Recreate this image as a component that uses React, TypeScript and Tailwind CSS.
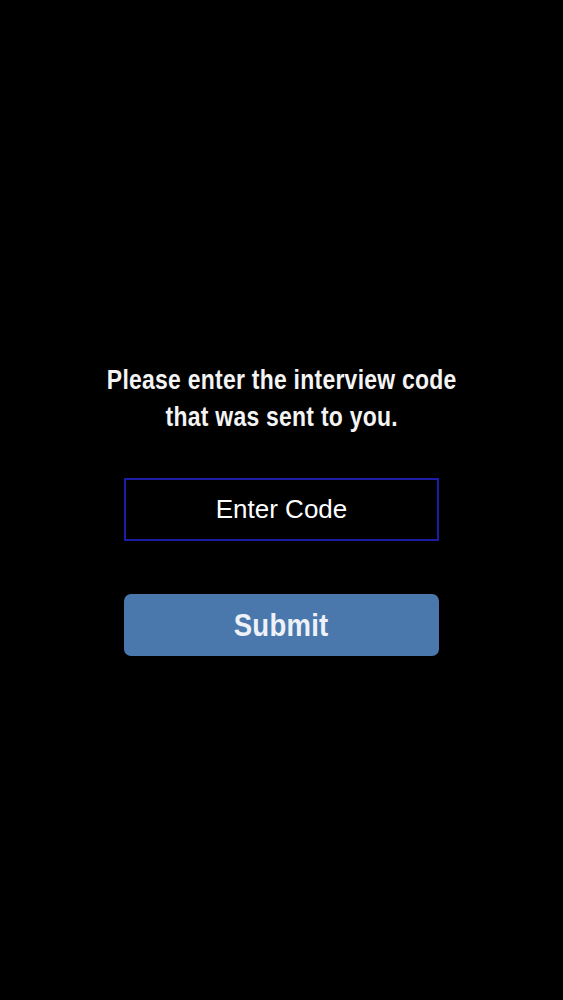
export default function App() {
  return (
    <div className="flex min-h-screen w-full flex-col items-center bg-black pt-[362px] font-['Liberation_Sans',Arial,sans-serif]">
      <h1 className="scale-x-[0.85] text-center text-[27px] font-bold leading-[37px] tracking-[0.3px] whitespace-nowrap text-[#f4f4f4]">
        Please enter the interview code
        <br />
        that was sent to you.
      </h1>

      <input
        type="text"
        placeholder="Enter Code"
        className="mt-[42px] h-[63px] w-[315px] border-2 border-[#1c1ca6] bg-black text-center text-[26px] text-white outline-none placeholder:text-white"
      />

      <button className="mt-[53px] flex h-[62px] w-[315px] items-center justify-center rounded-[7px] bg-[#4a78ac]">
        <span className="scale-x-[0.86] text-[32px] font-bold tracking-[0.3px] text-[#eef2f8]">Submit</span>
      </button>
    </div>
  );
}
